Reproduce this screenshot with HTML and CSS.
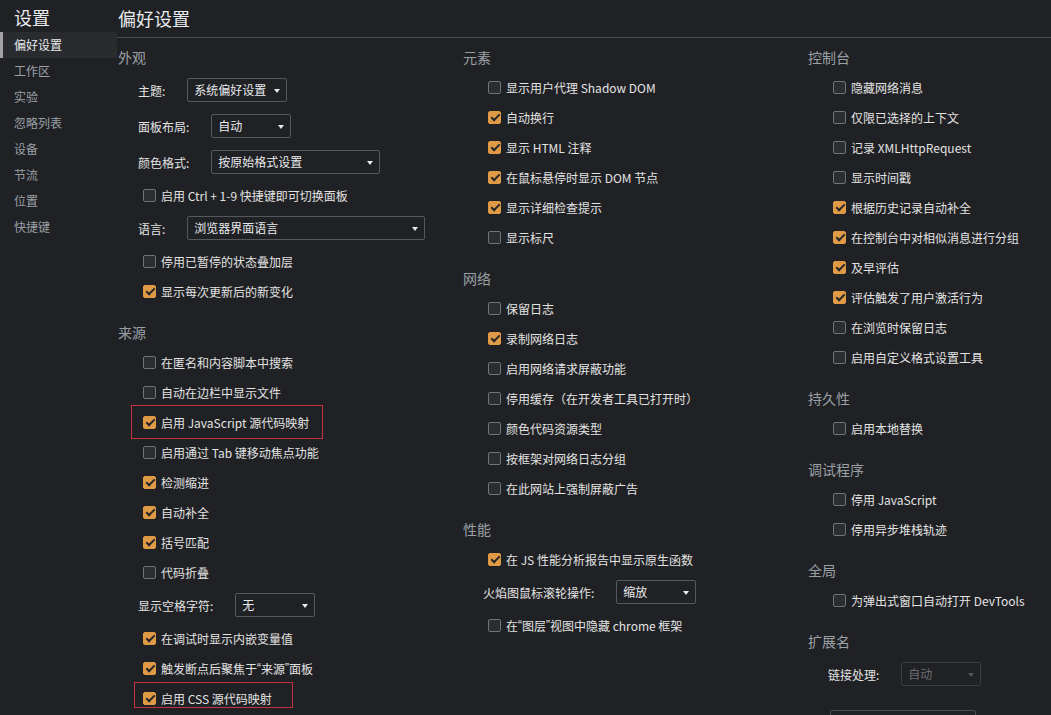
FILE: index.html
```html
<!DOCTYPE html>
<html lang="zh-CN">
<head>
<meta charset="utf-8">
<title>设置</title>
<link rel="stylesheet" href="styles.css">
</head>
<body>
<div class="app">
  <aside class="sidebar">
    <div class="side-title">设置</div>
    <nav class="nav">
      <div class="nav-item active">偏好设置</div>
      <div class="nav-item">工作区</div>
      <div class="nav-item">实验</div>
      <div class="nav-item">忽略列表</div>
      <div class="nav-item">设备</div>
      <div class="nav-item">节流</div>
      <div class="nav-item">位置</div>
      <div class="nav-item">快捷键</div>
    </nav>
  </aside>
  <main class="main">
    <header class="main-header">偏好设置</header>
    <div class="columns">
      <div class="col">
        <section class="sec">
          <h2 class="sec-title">外观</h2>
          <div class="row sel"><span class="lbl">主题:</span><span class="select w99">系统偏好设置<i class="arrow"></i></span></div>
          <div class="row sel"><span class="lbl">面板布局:</span><span class="select w79">自动<i class="arrow"></i></span></div>
          <div class="row sel"><span class="lbl">颜色格式:</span><span class="select w168">按原始格式设置<i class="arrow"></i></span></div>
          <div class="row cbrow"><span class="cb"></span>启用 Ctrl + 1-9 快捷键即可切换面板</div>
          <div class="row sel"><span class="lbl">语言:</span><span class="select w237">浏览器界面语言<i class="arrow"></i></span></div>
          <div class="row cbrow"><span class="cb"></span>停用已暂停的状态叠加层</div>
          <div class="row cbrow"><span class="cb on"></span>显示每次更新后的新变化</div>
        </section>
        <section class="sec">
          <h2 class="sec-title">来源</h2>
          <div class="row cbrow"><span class="cb"></span>在匿名和内容脚本中搜索</div>
          <div class="row cbrow"><span class="cb"></span>自动在边栏中显示文件</div>
          <div class="row cbrow"><span class="cb on"></span>启用 JavaScript 源代码映射<span class="mark mark-js"></span></div>
          <div class="row cbrow"><span class="cb"></span>启用通过 Tab 键移动焦点功能</div>
          <div class="row cbrow"><span class="cb on"></span>检测缩进</div>
          <div class="row cbrow"><span class="cb on"></span>自动补全</div>
          <div class="row cbrow"><span class="cb on"></span>括号匹配</div>
          <div class="row cbrow"><span class="cb"></span>代码折叠</div>
          <div class="row sel"><span class="lbl">显示空格字符:</span><span class="select w79">无<i class="arrow"></i></span></div>
          <div class="row cbrow"><span class="cb on"></span>在调试时显示内嵌变量值</div>
          <div class="row cbrow"><span class="cb on"></span>触发断点后聚焦于<span class="q">“</span>来源<span class="q">”</span>面板</div>
          <div class="row cbrow"><span class="cb on"></span>启用 CSS 源代码映射<span class="mark mark-css"></span></div>
        </section>
      </div>
      <div class="col">
        <section class="sec">
          <h2 class="sec-title">元素</h2>
          <div class="row cbrow"><span class="cb"></span>显示用户代理 Shadow DOM</div>
          <div class="row cbrow"><span class="cb on"></span>自动换行</div>
          <div class="row cbrow"><span class="cb on"></span>显示 HTML 注释</div>
          <div class="row cbrow"><span class="cb on"></span>在鼠标悬停时显示 DOM 节点</div>
          <div class="row cbrow"><span class="cb on"></span>显示详细检查提示</div>
          <div class="row cbrow"><span class="cb"></span>显示标尺</div>
        </section>
        <section class="sec">
          <h2 class="sec-title">网络</h2>
          <div class="row cbrow"><span class="cb"></span>保留日志</div>
          <div class="row cbrow"><span class="cb on"></span>录制网络日志</div>
          <div class="row cbrow"><span class="cb"></span>启用网络请求屏蔽功能</div>
          <div class="row cbrow"><span class="cb"></span>停用缓存（在开发者工具已打开时）</div>
          <div class="row cbrow"><span class="cb"></span>颜色代码资源类型</div>
          <div class="row cbrow"><span class="cb"></span>按框架对网络日志分组</div>
          <div class="row cbrow"><span class="cb"></span>在此网站上强制屏蔽广告</div>
        </section>
        <section class="sec">
          <h2 class="sec-title">性能</h2>
          <div class="row cbrow"><span class="cb on"></span>在 JS 性能分析报告中显示原生函数</div>
          <div class="row sel"><span class="lbl">火焰图鼠标滚轮操作:</span><span class="select w79">缩放<i class="arrow"></i></span></div>
          <div class="row cbrow"><span class="cb"></span>在<span class="q">“</span>图层<span class="q">”</span>视图中隐藏 chrome 框架</div>
        </section>
      </div>
      <div class="col">
        <section class="sec">
          <h2 class="sec-title">控制台</h2>
          <div class="row cbrow"><span class="cb"></span>隐藏网络消息</div>
          <div class="row cbrow"><span class="cb"></span>仅限已选择的上下文</div>
          <div class="row cbrow"><span class="cb"></span>记录 XMLHttpRequest</div>
          <div class="row cbrow"><span class="cb"></span>显示时间戳</div>
          <div class="row cbrow"><span class="cb on"></span>根据历史记录自动补全</div>
          <div class="row cbrow"><span class="cb on"></span>在控制台中对相似消息进行分组</div>
          <div class="row cbrow"><span class="cb on"></span>及早评估</div>
          <div class="row cbrow"><span class="cb on"></span>评估触发了用户激活行为</div>
          <div class="row cbrow"><span class="cb"></span>在浏览时保留日志</div>
          <div class="row cbrow"><span class="cb"></span>启用自定义格式设置工具</div>
        </section>
        <section class="sec">
          <h2 class="sec-title">持久性</h2>
          <div class="row cbrow"><span class="cb"></span>启用本地替换</div>
        </section>
        <section class="sec">
          <h2 class="sec-title">调试程序</h2>
          <div class="row cbrow"><span class="cb"></span>停用 JavaScript</div>
          <div class="row cbrow"><span class="cb"></span>停用异步堆栈轨迹</div>
        </section>
        <section class="sec">
          <h2 class="sec-title">全局</h2>
          <div class="row cbrow"><span class="cb"></span>为弹出式窗口自动打开 DevTools</div>
        </section>
        <section class="sec">
          <h2 class="sec-title">扩展名</h2>
          <div class="row sel"><span class="lbl">链接处理:</span><span class="select w79 disabled">自动<i class="arrow"></i></span></div>
          <div class="input-box"></div>
        </section>
      </div>
    </div>
  </main>
</div>
</body>
</html>
```

FILE: styles.css
```css
* { box-sizing: border-box; }
html, body {
  margin: 0;
  padding: 0;
  height: 100%;
  background: #202124;
  overflow: hidden;
}
body {
  font-family: "Noto Sans CJK SC", "Noto Sans", sans-serif;
  font-size: 12px;
  color: #e3e3e3;
}
.app {
  display: flex;
  height: 715px;
}
.sidebar {
  width: 117px;
  flex: none;
}
.side-title {
  height: 32px;
  padding: 2px 0 0 14px;
  line-height: 30px;
  font-size: 18px;
  color: #e8eaed;
}
.nav-item {
  height: 26px;
  line-height: 26px;
  padding-left: 14px;
  color: #9aa0a6;
  font-size: 12px;
}
.nav-item.active {
  background: #2a2b2e;
  color: #e8eaed;
  border-left: 3px solid #a3a3a3;
  padding-left: 11px;
}
.main {
  flex: 1;
  min-width: 0;
  overflow: hidden;
}
.main-header {
  height: 38px;
  line-height: 36px;
  padding-left: 1px;
  font-size: 18px;
  color: #e8eaed;
  border-bottom: 1px solid #4a4c50;
}
.columns {
  display: grid;
  grid-template-columns: 345px 345px 345px;
  padding: 4px 0 0 1px;
}
.sec { margin-bottom: 11px; }
.sec-title {
  margin: 0;
  height: 30px;
  line-height: 30px;
  font-size: 14px;
  font-weight: normal;
  color: #9aa0a6;
}
.row {
  position: relative;
  display: flex;
  align-items: center;
  white-space: nowrap;
}
.cbrow {
  height: 30px;
  padding-left: 25px;
}
.sel {
  height: 36px;
  padding-left: 20px;
}
.lbl { margin-right: 22px; }
.q { font-family: "Liberation Sans", sans-serif; }
.cb {
  position: relative;
  width: 13px;
  height: 13px;
  margin-right: 5px;
  border: 1px solid #707377;
  border-radius: 2px;
  background: #2c2d30;
  flex: none;
}
.cb.on {
  background: #e09a45;
  border-color: #e09a45;
}
.cb.on::after {
  content: "";
  position: absolute;
  left: 3.5px;
  top: 0.5px;
  width: 3px;
  height: 7px;
  border: solid #26272a;
  border-width: 0 2px 2px 0;
  transform: rotate(45deg);
}
.select {
  position: relative;
  height: 24px;
  line-height: 22px;
  padding-left: 6px;
  border: 1px solid #55585c;
  border-radius: 2px;
  background: #202124;
  color: #e8eaed;
}
.select.disabled {
  color: #6b6e72;
  border-color: #3a3c40;
}
.select.disabled .arrow { border-top-color: #55585c; }
.arrow {
  position: absolute;
  right: 6px;
  top: 10px;
  width: 0;
  height: 0;
  border-left: 3.5px solid transparent;
  border-right: 3.5px solid transparent;
  border-top: 4px solid #e8eaed;
}
.w79 { width: 80px; }
.w99 { width: 100px; }
.w168 { width: 169px; }
.w237 { width: 238px; }
.mark {
  position: absolute;
  border: 1px solid #c4313f;
  pointer-events: none;
}
.mark-js {
  left: 13px;
  top: -2px;
  width: 192px;
  height: 34px;
}
.mark-css {
  left: 16px;
  top: -1px;
  width: 159px;
  height: 26px;
}
.input-box {
  margin: 18px 0 0 22px;
  width: 146px;
  height: 24px;
  border: 1px solid #4a4c50;
  border-radius: 2px;
}
```
